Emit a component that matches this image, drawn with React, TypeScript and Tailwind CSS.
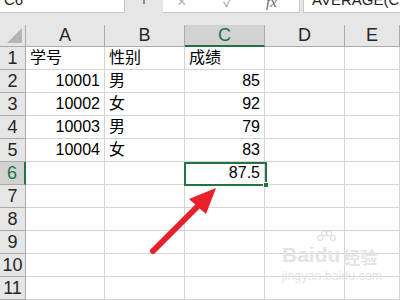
import React from 'react';

const cols = [
  { key: 'A', w: 'w-[79px]' },
  { key: 'B', w: 'w-[80px]' },
  { key: 'C', w: 'w-[80px]' },
  { key: 'D', w: 'w-[80px]' },
  { key: 'E', w: 'w-[55px]' },
];

type Cell = { text: string; align?: 'left' | 'right' };

const rows: Cell[][] = [
  [{ text: '学号' }, { text: '性别' }, { text: '成绩' }],
  [{ text: '10001', align: 'right' }, { text: '男' }, { text: '85', align: 'right' }],
  [{ text: '10002', align: 'right' }, { text: '女' }, { text: '92', align: 'right' }],
  [{ text: '10003', align: 'right' }, { text: '男' }, { text: '79', align: 'right' }],
  [{ text: '10004', align: 'right' }, { text: '女' }, { text: '83', align: 'right' }],
  [{ text: '' }, { text: '' }, { text: '87.5', align: 'right' }],
  [], [], [], [], [],
];

const font = "font-['Liberation_Sans','Noto_Sans_CJK_SC',sans-serif]";

export default function App() {
  return (
    <div className={`relative w-[400px] h-[300px] overflow-hidden bg-[#e6e6e6] ${font}`}>
      {/* formula bar, scrolled mostly out of view */}
      <div className="flex h-[25px] items-start">
        <div className="w-[125px] h-[13px] bg-white border-b border-r border-[#c6c6c6] overflow-hidden relative">
          <span className="absolute left-[4px] -top-[11px] text-[15px] text-[#222]">C6</span>
        </div>
        <div className="w-[38px] h-[13px] flex justify-center">
          <div className="w-[2px] h-[4px] bg-[#8a8a8a] mt-0"></div>
        </div>
        <div className="w-[137px] h-[13px] bg-white border-b border-r border-[#c6c6c6] relative overflow-hidden text-[#b0b0b0]">
          <span className="absolute left-[14px] -top-[10px] text-[16px]">×</span>
          <span className="absolute left-[60px] -top-[10px] text-[16px]">✓</span>
          <span className="absolute left-[103px] -top-[9px] text-[15px] italic font-['Liberation_Serif',serif] text-[#666]">fx</span>
        </div>
        <div className="w-[3px]"></div>
        <div className="flex-1 h-[13px] bg-white border-b border-l border-[#c6c6c6] relative overflow-hidden">
          <span className="absolute left-[8px] -top-[11px] text-[15px] text-[#222] whitespace-nowrap">AVERAGE(C2:C5)</span>
        </div>
      </div>

      {/* column headers */}
      <div className="flex h-[22px]">
        <div className="w-[26px] h-full border-r border-b border-[#ababab] relative overflow-hidden">
          <svg className="absolute right-[3px] bottom-[3px]" width="15" height="15" viewBox="0 0 15 15">
            <polygon points="15,0 15,15 0,15" fill="#b4b4b4" />
          </svg>
        </div>
        {cols.map((c) => (
          <div
            key={c.key}
            className={`${c.w} h-full flex items-center justify-center text-[18px] ${
              c.key === 'C'
                ? 'bg-[#d2d2d2] text-[#217346] border-b-2 border-b-[#217346] border-r border-r-[#ababab]'
                : 'text-[#262626] border-r border-b border-[#ababab]'
            }`}
          >
            {c.key}
          </div>
        ))}
      </div>

      {/* rows */}
      <div className="flex flex-col bg-white">
        {rows.map((r, i) => (
          <div key={i} className="flex h-[23px]">
            <div
              className={`w-[26px] h-full flex items-center justify-center text-[18px] border-b border-[#ababab] ${
                i === 5
                  ? 'bg-[#d2d2d2] text-[#217346] border-r-2 border-r-[#217346]'
                  : 'bg-[#e6e6e6] text-[#262626] border-r'
              }`}
            >
              {i + 1}
            </div>
            {cols.map((c, j) => {
              const cell = r[j];
              return (
                <div
                  key={c.key}
                  className={`${c.w} h-full border-r border-b border-[#d4d4d4] flex items-center px-[4px] text-[16px] text-black ${
                    cell?.align === 'right' ? 'justify-end' : 'justify-start'
                  }`}
                >
                  {cell?.text}
                </div>
              );
            })}
          </div>
        ))}
      </div>

      {/* active cell C6 */}
      <div className="absolute left-[184px] top-[162px] w-[83px] h-[24px] border-2 border-[#217346]">
        <div className="absolute -right-[4px] -bottom-[4px] w-[6px] h-[6px] bg-[#217346] border border-white"></div>
      </div>

      {/* red arrow */}
      <svg className="absolute left-0 top-0" width="400" height="300" viewBox="0 0 400 300">
        <line x1="153" y1="251" x2="200" y2="204" stroke="#e8202a" strokeWidth="6" strokeLinecap="round" />
        <polygon points="216,188 189,199 206,214" fill="#e8202a" />
      </svg>

      {/* watermark */}
      <div className="absolute left-[282px] top-[244px] flex flex-col items-start text-[#e4e4e4] pointer-events-none">
        <div className="flex items-end leading-none">
          <span className="text-[21px] font-bold font-['Liberation_Sans',sans-serif]">Bai</span>
          <span className="relative text-[21px] font-bold font-['Liberation_Sans',sans-serif]">
            du
            <svg className="absolute left-[1px] -top-[14px]" width="20" height="16" viewBox="0 0 20 16">
              <circle cx="4" cy="8" r="2.5" fill="none" stroke="#dedede" strokeWidth="1.2" />
              <circle cx="8" cy="3.5" r="2.5" fill="none" stroke="#dedede" strokeWidth="1.2" />
              <circle cx="13" cy="3.5" r="2.5" fill="none" stroke="#dedede" strokeWidth="1.2" />
              <circle cx="17" cy="8" r="2.5" fill="none" stroke="#dedede" strokeWidth="1.2" />
            </svg>
          </span>
          <span className="ml-[3px] text-[17px] font-bold font-['Noto_Sans_CJK_SC',sans-serif]">经验</span>
        </div>
        <span className="mt-[2px] text-[12px] tracking-[0.2px] font-['Liberation_Sans',sans-serif]">jingyan.baidu.com</span>
      </div>
    </div>
  );
}
